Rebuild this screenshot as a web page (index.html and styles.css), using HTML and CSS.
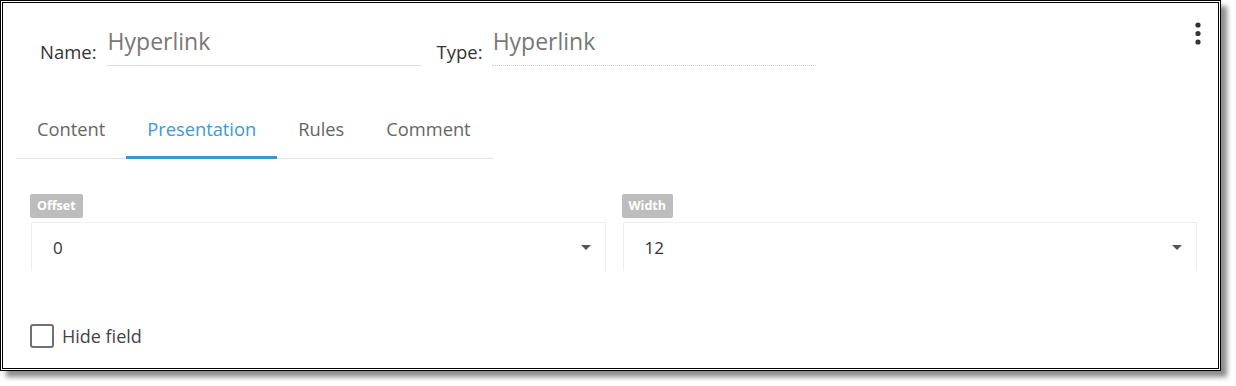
FILE: index.html
```html
<!DOCTYPE html>
<html lang="en">
<head>
	<meta charset="UTF-8">
	<title>Hyperlink field</title>
	<link rel="stylesheet" href="styles.css">
</head>
<body>
	<div class="frame">
		<div class="head">
			<span class="label">Name:</span>
			<div class="value name">Hyperlink</div>
			<span class="label type-label">Type:</span>
			<div class="value type">Hyperlink</div>
			<svg class="kebab" width="6" height="25" viewBox="0 0 6 25">
				<circle cx="3" cy="3" r="2.6"/>
				<circle cx="3" cy="11.5" r="2.6"/>
				<circle cx="3" cy="20" r="2.6"/>
			</svg>
		</div>
		<ul class="tabs">
			<li>Content</li>
			<li class="active">Presentation</li>
			<li>Rules</li>
			<li>Comment</li>
		</ul>
		<div class="fields">
			<div class="field">
				<span class="badge">Offset</span>
				<div class="select">
					<span>0</span>
					<i class="caret"></i>
				</div>
			</div>
			<div class="field">
				<span class="badge">Width</span>
				<div class="select">
					<span>12</span>
					<i class="caret"></i>
				</div>
			</div>
		</div>
		<label class="check">
			<span class="box"></span>
			<span>Hide field</span>
		</label>
	</div>
</body>
</html>
```

FILE: styles.css
```css
html, body, div, ul, li {
	padding: 0;
	margin: 0;
}
body {
	height: 386px;
	background: #fff;
	font-family: "Open Sans", "Liberation Sans", sans-serif;
}
.frame {
	box-sizing: border-box;
	width: 1221px;
	height: 371px;
	border: 3px double #000;
	background: #fff;
	box-shadow: 6px 6px 5px rgba(0,0,0,0.45);
}
.head {
	display: flex;
	align-items: flex-end;
	padding: 22px 17px 0 37px;
}
.label {
	font-size: 18.5px;
	line-height: 20px;
	padding-bottom: 4px;
	color: #333;
}
.value {
	font-size: 23px;
	line-height: 32px;
	padding: 0 0 8px 1px;
	color: #777;
	margin-left: 10px;
}
.name {
	width: 313px;
	border-bottom: 1px solid #ddd;
}
.type-label {
	margin-left: 16px;
}
.type {
	width: 323px;
	margin-left: 9px;
	border-bottom: 1px dotted #ccc;
}
.kebab {
	align-self: flex-start;
	margin: -3px 0 0 auto;
	fill: #333;
}
.tabs {
	list-style: none;
	display: flex;
	width: 477px;
	margin: 40px 0 0 13px;
	border-bottom: 1px solid #e5e5e5;
}
.tabs li {
	flex-shrink: 0;
	padding: 11px 21px 15px;
	font-size: 18.3px;
	line-height: 24px;
	color: #666;
	border-bottom: 3px solid transparent;
	margin-bottom: -1px;
}
.tabs li.active {
	color: #3a9ad9;
	border-bottom-color: #3a96cf;
}
.fields {
	display: grid;
	grid-template-columns: 1fr 1fr;
	gap: 16px;
	padding: 34px 21px 0 27px;
}
.badge {
	display: inline-block;
	height: 24px;
	line-height: 24px;
	padding: 0 7px;
	border-radius: 2px;
	background: #bdbdbd;
	color: #fff;
	font-size: 12.5px;
	font-weight: 700;
}
.select {
	display: flex;
	align-items: center;
	justify-content: space-between;
	height: 48px;
	margin: 4px 0 0 1px;
	padding: 0 14px 0 21px;
	border: 1px solid #eee;
	border-bottom: none;
	font-size: 17px;
	color: #333;
}
.caret {
	width: 0;
	height: 0;
	border-left: 5px solid transparent;
	border-right: 5px solid transparent;
	border-top: 5px solid #555;
}
.check {
	display: flex;
	align-items: center;
	gap: 8px;
	margin: 53px 0 0 27px;
	font-size: 18px;
	color: #444;
}
.box {
	box-sizing: border-box;
	width: 24px;
	height: 24px;
	border: 2px solid #707070;
	border-radius: 3px;
}
```
